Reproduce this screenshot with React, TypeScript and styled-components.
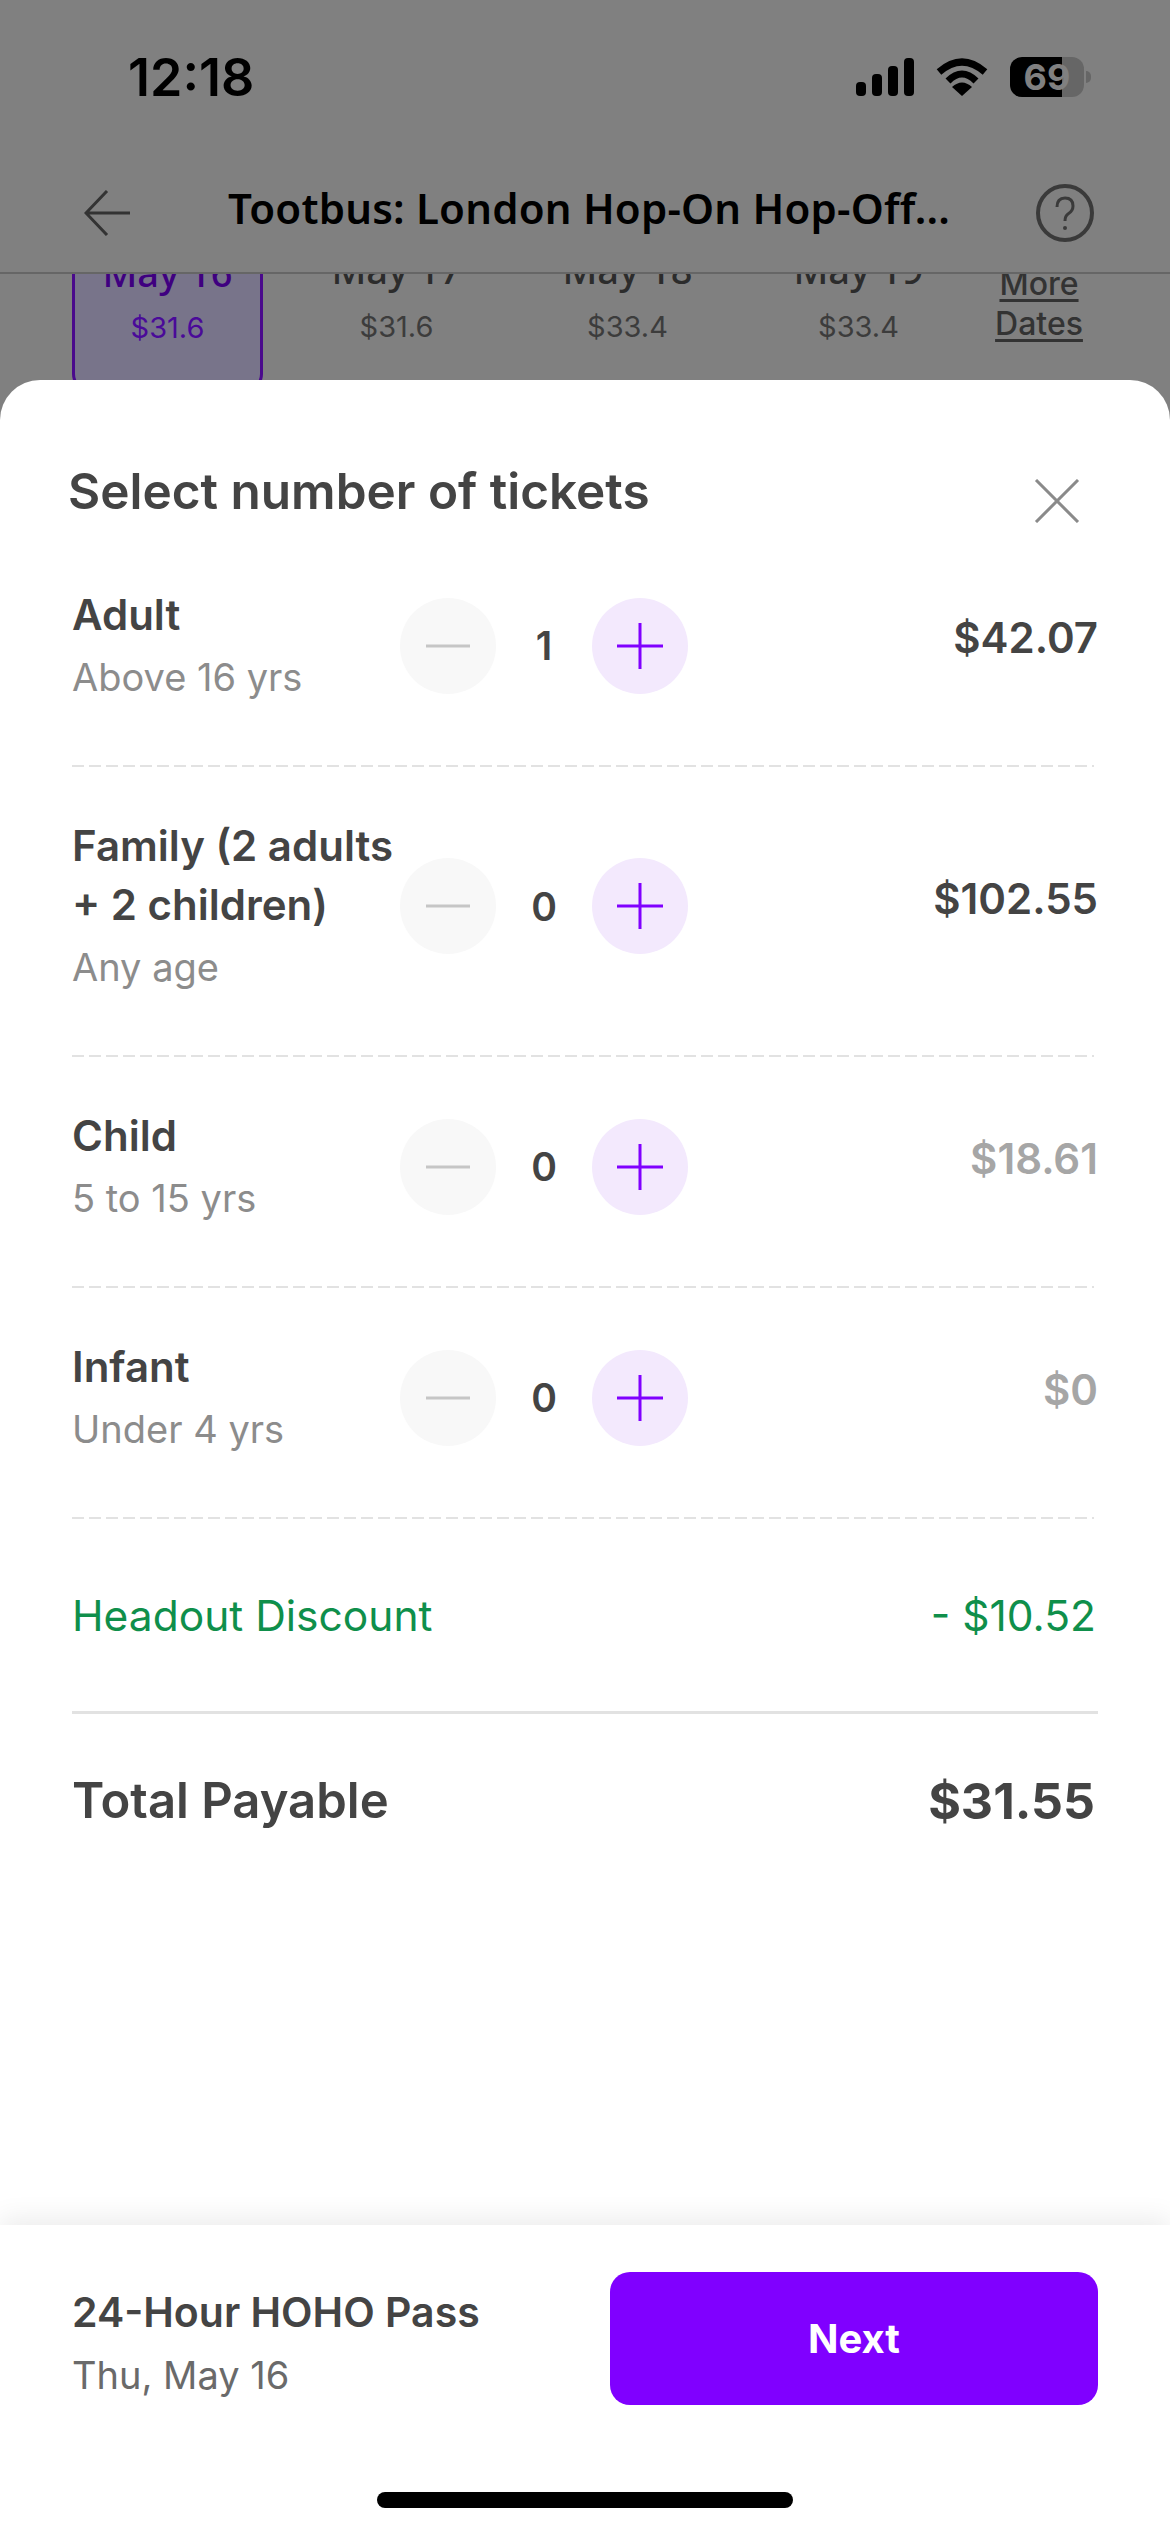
import React from "react";
import styled, { createGlobalStyle } from "styled-components";

const GlobalStyle = createGlobalStyle`
  html, body {
    margin: 0;
    padding: 0;
    background: #808080;
  }
  * {
    box-sizing: border-box;
  }
`;

const tickets = [
  { name: "Adult", sub: "Above 16 yrs", count: 1, price: "$42.07", muted: false },
  { name: "Family (2 adults + 2 children)", sub: "Any age", count: 0, price: "$102.55", muted: false },
  { name: "Child", sub: "5 to 15 yrs", count: 0, price: "$18.61", muted: true },
  { name: "Infant", sub: "Under 4 yrs", count: 0, price: "$0", muted: true },
];

const dates = [
  { day: "May 17", price: "$31.6" },
  { day: "May 18", price: "$33.4" },
  { day: "May 19", price: "$33.4" },
];

const App: React.FC = () => {
  return (
    <Screen>
      <GlobalStyle />
      <StatusBar>
        <Time>12:18</Time>
        <StatusIcons>
          <svg width="58" height="38" viewBox="0 0 58 38" fill="#000">
            <rect x="0" y="24" width="10" height="14" rx="4" />
            <rect x="16" y="16" width="10" height="22" rx="4" />
            <rect x="32" y="8" width="10" height="30" rx="4" />
            <rect x="48" y="0" width="10" height="38" rx="4" />
          </svg>
          <svg width="52" height="38" viewBox="0 0 52 38" fill="none" stroke="#000" strokeWidth="7">
            <path d="M3 14 Q26 -6 49 14" />
            <path d="M12 23 Q26 9 40 23" />
            <path d="M16 29 L26 38 L36 29 Q26 20 16 29Z" fill="#000" stroke="none" />
          </svg>
          <Battery>
            <BatteryBody>69</BatteryBody>
            <BatteryNub />
          </Battery>
        </StatusIcons>
      </StatusBar>

      <Header>
        <svg width="46" height="46" viewBox="0 0 46 46" fill="none" stroke="#333" strokeWidth="3">
          <path d="M23 1 L2 23 L23 45 M2 23 H46" />
        </svg>
        <HeaderTitle>Tootbus: London Hop-On Hop-Off...</HeaderTitle>
        <HelpIcon>
          <svg width="58" height="58" viewBox="0 0 58 58" fill="none" stroke="#3a3a3a" strokeWidth="4">
            <circle cx="29" cy="29" r="27" />
            <path d="M21 23 Q21 14 29 14 Q37 14 37 22 Q37 27 32 30 Q29 32 29 37" strokeWidth="3" />
            <circle cx="29" cy="44" r="2" fill="#3a3a3a" stroke="none" />
          </svg>
        </HelpIcon>
      </Header>

      <DateStrip>
        <SelectedDate>
          <DateDay $selected>May 16</DateDay>
          <DatePrice $selected>$31.6</DatePrice>
        </SelectedDate>
        {dates.map((d) => (
          <DateItem key={d.day}>
            <DateDay>{d.day}</DateDay>
            <DatePrice>{d.price}</DatePrice>
          </DateItem>
        ))}
        <MoreDates>
          <span>More</span>
          <span>Dates</span>
        </MoreDates>
      </DateStrip>

      <Sheet>
        <SheetHeader>
          <SheetTitle>Select number of tickets</SheetTitle>
          <svg width="46" height="44" viewBox="0 0 46 44" fill="none" stroke="#8a8a8a" strokeWidth="3">
            <path d="M2 1 L44 43 M44 1 L2 43" />
          </svg>
        </SheetHeader>

        <SheetBody>
          {tickets.map((t) => (
            <React.Fragment key={t.name}>
              <TicketRow>
                <TicketLabel>
                  <TicketName>{t.name}</TicketName>
                  <TicketSub>{t.sub}</TicketSub>
                </TicketLabel>
                <Stepper>
                  <StepButton>
                    <svg width="44" height="44" viewBox="0 0 44 44" stroke="#c6c6c6" strokeWidth="3">
                      <path d="M0 22 H44" />
                    </svg>
                  </StepButton>
                  <Count>{t.count}</Count>
                  <StepButton $primary>
                    <svg width="46" height="46" viewBox="0 0 46 46" stroke="#8000ff" strokeWidth="3">
                      <path d="M0 23 H46 M23 0 V46" />
                    </svg>
                  </StepButton>
                </Stepper>
                <TicketPrice $muted={t.muted}>{t.price}</TicketPrice>
              </TicketRow>
              <DashedLine />
            </React.Fragment>
          ))}

          <DiscountRow>
            <span>Headout Discount</span>
            <span>- $10.52</span>
          </DiscountRow>
          <TotalRow>
            <TotalLabel>Total Payable</TotalLabel>
            <TotalValue>$31.55</TotalValue>
          </TotalRow>
        </SheetBody>

        <Footer>
          <FooterContent>
            <PassInfo>
              <PassName>24-Hour HOHO Pass</PassName>
              <PassDate>Thu, May 16</PassDate>
            </PassInfo>
            <NextButton>Next</NextButton>
          </FooterContent>
          <HomeIndicator />
        </Footer>
      </Sheet>
    </Screen>
  );
};

export default App;

const Screen = styled.div`
  width: 1170px;
  height: 2532px;
  display: flex;
  flex-direction: column;
  overflow: hidden;
  background: #808080;
  font-family: "Inter", "Liberation Sans", sans-serif;
  color: #444;
`;

const StatusBar = styled.div`
  height: 154px;
  flex: none;
  display: flex;
  justify-content: space-between;
  align-items: center;
  padding: 0 79px 0 128px;
`;

const Time = styled.div`
  font-size: 52px;
  font-weight: 600;
  color: #000;
`;

const StatusIcons = styled.div`
  display: flex;
  align-items: center;
  gap: 22px;
`;

const Battery = styled.div`
  display: flex;
  align-items: center;
  gap: 2px;
`;

const BatteryBody = styled.div`
  width: 74px;
  height: 40px;
  border-radius: 12px;
  background: linear-gradient(90deg, #000 70%, #666 70%);
  color: #808080;
  font-size: 36px;
  font-weight: 700;
  line-height: 40px;
  text-align: center;
`;

const BatteryNub = styled.div`
  width: 5px;
  height: 12px;
  border-radius: 0 6px 6px 0;
  background: #666;
`;

const Header = styled.div`
  height: 120px;
  flex: none;
  display: flex;
  align-items: center;
  padding: 0 76px 0 84px;
  border-bottom: 2px solid #666;
`;

const HeaderTitle = styled.div`
  margin-left: 98px;
  margin-bottom: 11px;
  font-family: "Noto Sans", sans-serif;
  font-size: 42px;
  font-weight: 600;
  letter-spacing: 0.2px;
  color: #000;
  white-space: nowrap;
`;

const HelpIcon = styled.div`
  margin-left: auto;
  display: flex;
`;

const DateStrip = styled.div`
  height: 106px;
  flex: none;
  overflow: hidden;
  display: grid;
  grid-template-columns: 191px 231px 231px 231px auto;
  padding-left: 72px;
  align-items: start;
`;

const SelectedDate = styled.div`
  margin-top: -27px;
  height: 145px;
  border: 3px solid #4a0a8c;
  border-radius: 18px;
  background: #78748a;
  text-align: center;
`;

const DateItem = styled.div`
  margin-top: -27px;
  margin-left: 36px;
  text-align: center;
`;

const DateDay = styled.div<{ $selected?: boolean }>`
  font-family: "Noto Sans", sans-serif;
  font-size: 38px;
  line-height: 44px;
  font-weight: 500;
  color: ${(p) => (p.$selected ? "#3f0080" : "#2c2c2c")};
`;

const DatePrice = styled.div<{ $selected?: boolean }>`
  margin-top: ${(p) => (p.$selected ? "16px" : "18px")};
  font-size: 29px;
  line-height: 36px;
  color: ${(p) => (p.$selected ? "#4a0a99" : "#3c3c3c")};
`;

const MoreDates = styled.div`
  margin-left: -48px;
  margin-top: -10px;
  display: flex;
  flex-direction: column;
  align-items: center;
  font-size: 32px;
  line-height: 40px;
  font-weight: 500;
  color: #333;
  text-decoration: underline;
  text-underline-offset: 4px;
`;

const Sheet = styled.div`
  flex: 1;
  display: flex;
  flex-direction: column;
  background: #fff;
  border-radius: 40px 40px 0 0;
`;

const SheetHeader = styled.div`
  display: flex;
  justify-content: space-between;
  align-items: flex-start;
  padding: 90px 90px 0 68px;
  height: 205px;
  flex: none;
  svg {
    margin-top: 9px;
  }
`;

const SheetTitle = styled.div`
  font-size: 49.5px;
  line-height: 42px;
  font-weight: 600;
  color: #444;
`;

const SheetBody = styled.div`
  padding: 0 72px;
`;

const TicketRow = styled.div`
  display: grid;
  grid-template-columns: 328px auto 1fr;
  padding: 0 0 58px;
  margin-top: 49px;
  &:first-child {
    margin-top: 0;
  }
`;

const TicketLabel = styled.div``;

const TicketName = styled.div`
  font-size: 42px;
  line-height: 59px;
  font-weight: 600;
  color: #444;
`;

const TicketSub = styled.div`
  margin-top: 4px;
  font-size: 38px;
  line-height: 58px;
  color: #8c8c8c;
`;

const Stepper = styled.div`
  align-self: center;
  display: flex;
  align-items: center;
`;

const StepButton = styled.div<{ $primary?: boolean }>`
  width: 96px;
  height: 96px;
  border-radius: 50%;
  display: flex;
  align-items: center;
  justify-content: center;
  background: ${(p) => (p.$primary ? "#f3e9fd" : "#f8f8f8")};
`;

const Count = styled.div`
  width: 96px;
  text-align: center;
  font-size: 39px;
  font-weight: 600;
  color: #444;
`;

const TicketPrice = styled.div<{ $muted?: boolean }>`
  align-self: center;
  margin-bottom: 16px;
  text-align: right;
  font-size: 42px;
  font-weight: 600;
  color: ${(p) => (p.$muted ? "#a6a6a6" : "#444")};
`;

const DashedLine = styled.div`
  width: 1022px;
  height: 2px;
  margin-top: 1px;
  background: repeating-linear-gradient(90deg, #e2e2e2 0 12px, transparent 12px 17px);
`;

const DiscountRow = styled.div`
  display: flex;
  justify-content: space-between;
  height: 195px;
  padding-top: 68px;
  padding-right: 2px;
  border-bottom: 3px solid #e2e2e2;
  font-size: 42.5px;
  line-height: 58px;
  color: #0f8f4b;
`;

const TotalRow = styled.div`
  display: flex;
  justify-content: space-between;
  align-items: center;
  padding: 58px 3px 0 0;
`;

const TotalLabel = styled.div`
  font-size: 49px;
  line-height: 58px;
  font-weight: 600;
  color: #444;
`;

const TotalValue = styled(TotalLabel)`
  font-size: 50px;
  font-weight: 700;
`;

const Footer = styled.div`
  margin-top: auto;
  height: 307px;
  display: flex;
  flex-direction: column;
  align-items: center;
  background: #fff;
  box-shadow: 0 -8px 24px rgba(0, 0, 0, 0.07);
`;

const FooterContent = styled.div`
  width: 100%;
  display: flex;
  justify-content: space-between;
  align-items: center;
  padding: 47px 72px 0;
`;

const PassInfo = styled.div`
  padding-top: 10px;
`;

const PassName = styled.div`
  font-size: 41px;
  line-height: 58px;
  font-weight: 600;
  color: #444;
`;

const PassDate = styled.div`
  margin-top: 5px;
  font-size: 38px;
  line-height: 58px;
  color: #6a6a6a;
`;

const NextButton = styled.div`
  width: 488px;
  height: 133px;
  border-radius: 20px;
  display: flex;
  align-items: center;
  justify-content: center;
  background: #8000ff;
  color: #fff;
  font-size: 40px;
  font-weight: 700;
`;

const HomeIndicator = styled.div`
  margin-top: 87px;
  width: 416px;
  height: 16px;
  border-radius: 8px;
  background: #000;
`;
